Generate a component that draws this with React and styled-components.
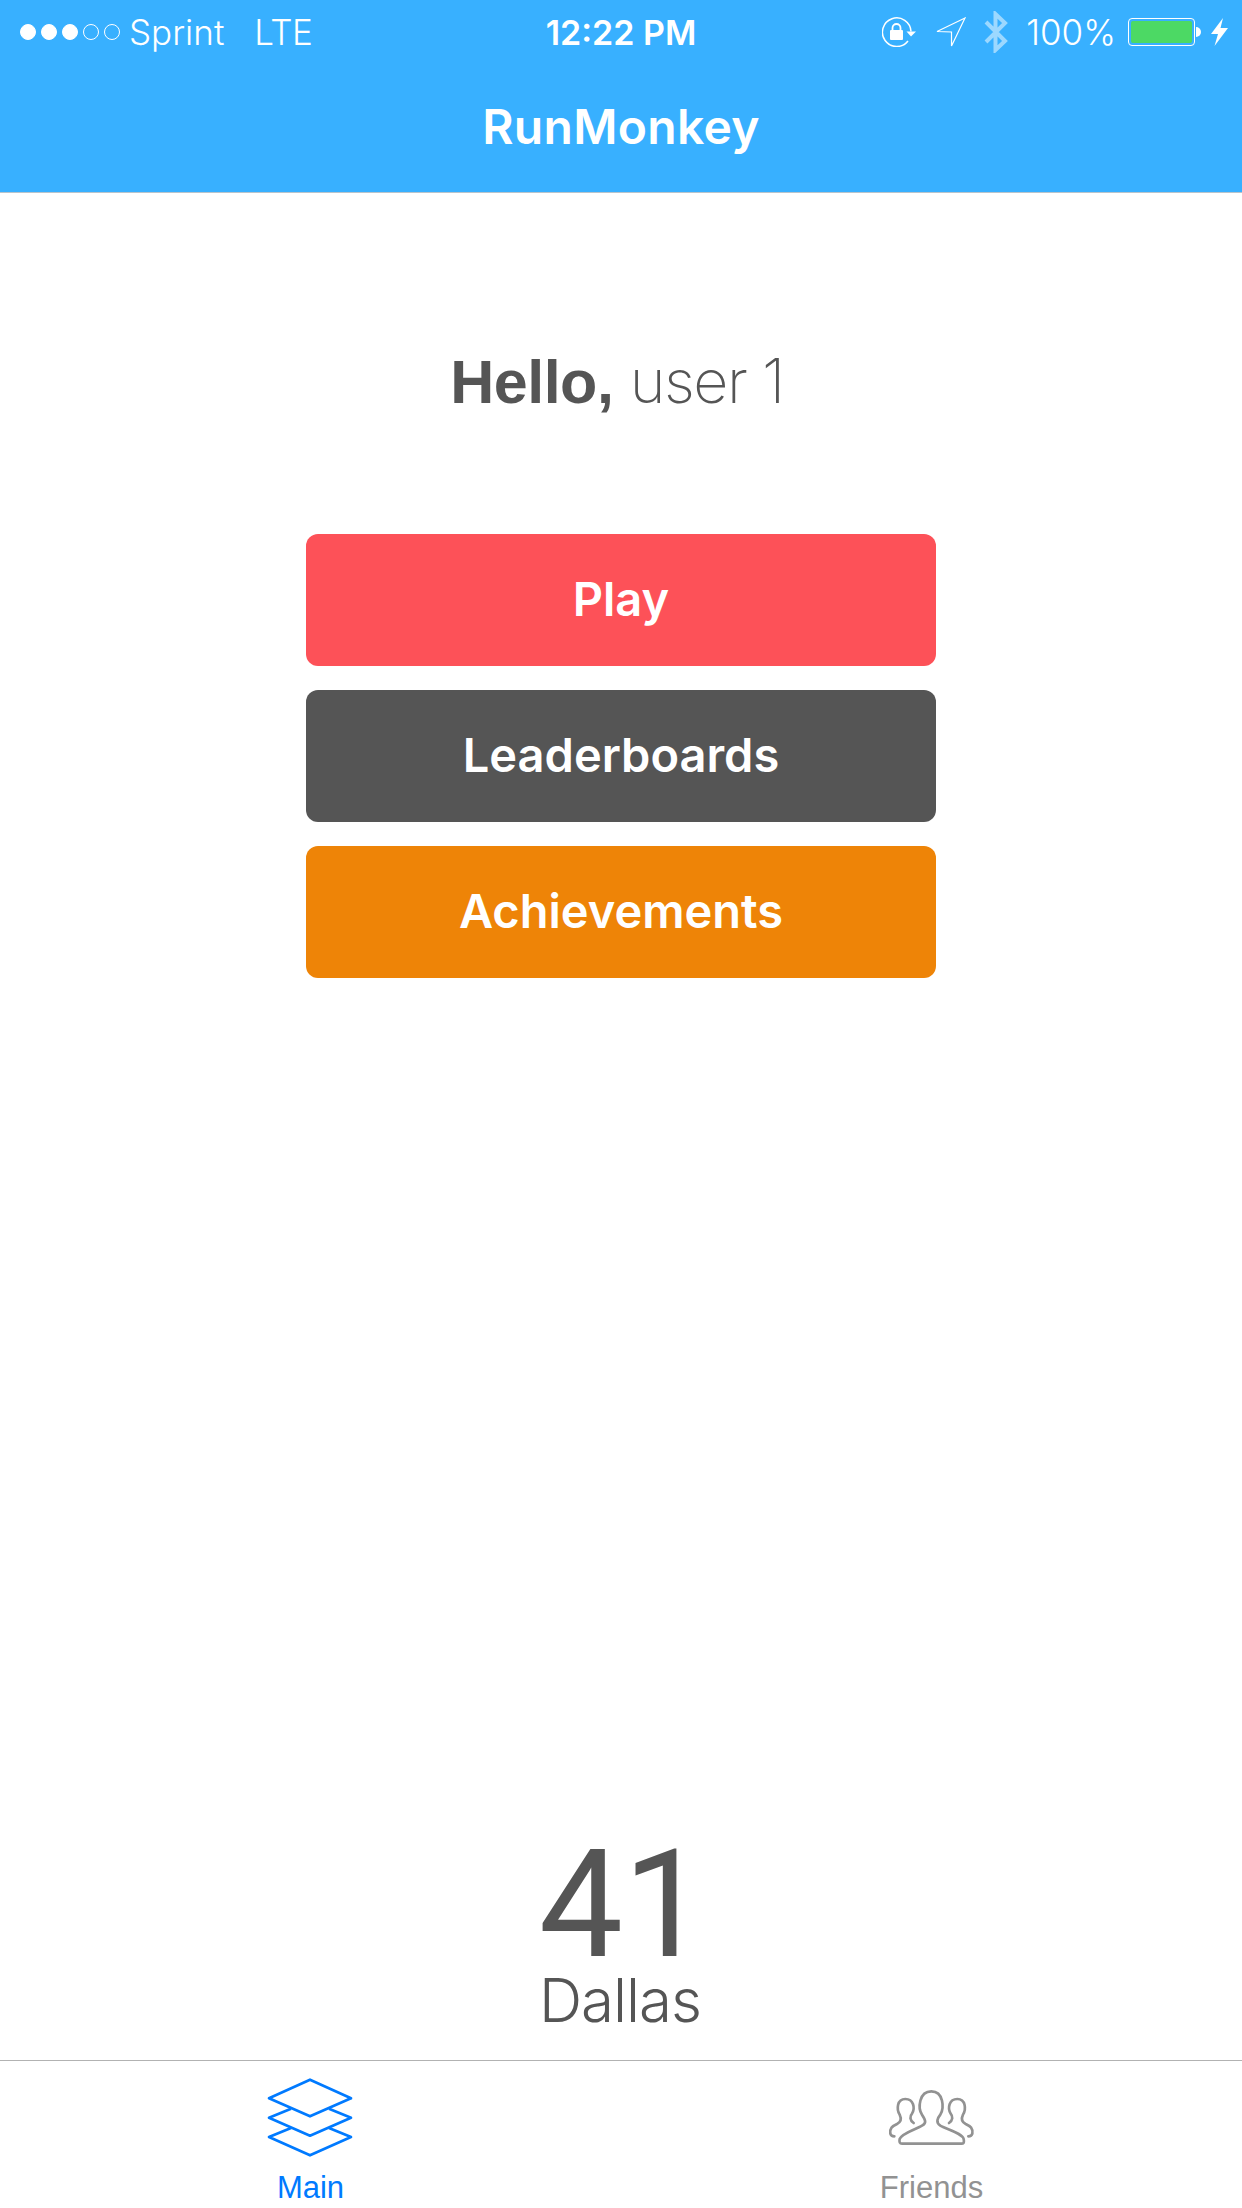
import React from 'react';
import styled, { createGlobalStyle } from 'styled-components';

const GlobalStyle = createGlobalStyle`
  html, body {
    margin: 0;
    padding: 0;
    background: #fff;
  }
`;

const Page = styled.div`
  width: 1242px;
  height: 2208px;
  display: flex;
  flex-direction: column;
  overflow: hidden;
  background: #fff;
  font-family: 'Liberation Sans', Arial, sans-serif;
  color: #555;
`;

const Header = styled.header`
  height: 193px;
  flex: none;
  box-sizing: border-box;
  background: #38b0ff;
  border-bottom: 1px solid #b8c4cc;
  color: #fff;
`;

const StatusBar = styled.div`
  height: 64px;
  display: grid;
  grid-template-columns: 1fr auto 1fr;
  align-items: center;
  padding: 0 14px 0 20px;
  font-family: Inter, sans-serif;
  font-weight: 300;
  font-size: 35px;
`;

const StatusLeft = styled.div`
  display: flex;
  align-items: center;
`;

const Signal = styled.div`
  display: flex;
  gap: 5px;
  margin-right: 9px;
`;

const Dot = styled.span`
  width: 16px;
  height: 16px;
  box-sizing: border-box;
  border-radius: 50%;
  border: 1.5px solid #fff;
  background: ${(p) => (p.$on ? '#fff' : 'transparent')};
`;

const Network = styled.span`
  margin-left: 30px;
  letter-spacing: -0.5px;
`;

const Clock = styled.div`
  font-weight: 600;
  font-size: 34px;
  margin-right: 6px;
`;

const StatusRight = styled.div`
  display: flex;
  align-items: center;
  justify-content: flex-end;
`;

const Percent = styled.span`
  margin: 0 12px 0 18px;
`;

const Battery = styled.div`
  width: 67px;
  height: 28px;
  box-sizing: border-box;
  padding: 2px;
  border: 1px solid #fff;
  border-radius: 4px;
  position: relative;
  &::after {
    content: '';
    position: absolute;
    right: -7px;
    top: 8px;
    width: 5px;
    height: 10px;
    background: #fff;
    border-radius: 0 5px 5px 0;
  }
`;

const BatteryFill = styled.div`
  height: 100%;
  background: #4cd964;
  border-radius: 2px;
`;

const Title = styled.h1`
  margin: 0;
  height: 128px;
  display: flex;
  align-items: center;
  justify-content: center;
  font-family: Inter, sans-serif;
  font-size: 48px;
  font-weight: 600;
  letter-spacing: 0.3px;
  padding-bottom: 4px;
  box-sizing: border-box;
`;

const Main = styled.main`
  flex: 1;
  display: flex;
  flex-direction: column;
  align-items: center;
`;

const Greeting = styled.p`
  margin: 152px 0 0;
  height: 189px;
  padding-right: 8px;
  font-size: 61px;
  line-height: 72px;
  letter-spacing: -0.5px;
  b {
    font-weight: 700;
  }
  span {
    font-family: Inter, sans-serif;
    font-weight: 200;
    letter-spacing: -1.5px;
  }
`;

const Buttons = styled.div`
  width: 630px;
  display: flex;
  flex-direction: column;
  gap: 24px;
`;

const ActionButton = styled.button`
  height: 132px;
  border: 0;
  border-radius: 12px;
  padding: 0 0 4px;
  background: ${(p) => p.$color};
  color: #fff;
  font-family: Inter, sans-serif;
  font-size: 47px;
  font-weight: 600;
`;

const Stat = styled.div`
  margin-top: auto;
  padding-bottom: 25px;
  display: flex;
  flex-direction: column;
  align-items: center;
`;

const StatValue = styled.div`
  font-family: Roboto, sans-serif;
  font-size: 150px;
  line-height: 120px;
  margin-left: 4px;
`;

const StatLabel = styled.div`
  font-family: Inter, sans-serif;
  font-weight: 300;
  font-size: 60px;
  line-height: 70px;
  letter-spacing: -1px;
  margin-right: 2px;
`;

const TabBar = styled.nav`
  height: 148px;
  flex: none;
  display: grid;
  grid-template-columns: 1fr 1fr;
  border-top: 1px solid #b2b2b2;
  box-sizing: border-box;
  overflow: hidden;
`;

const Tab = styled.div`
  display: flex;
  flex-direction: column;
  align-items: center;
  color: ${(p) => (p.$active ? '#007aff' : '#929292')};
`;

const TabIcon = styled.div`
  height: 96px;
  display: flex;
  align-items: center;
  justify-content: center;
  padding-top: 18px;
  box-sizing: border-box;
  margin-bottom: 14px;
`;

const TabLabel = styled.div`
  font-size: 31px;
  line-height: 34px;
`;

const RotationLock = () => (
  <svg width="36" height="30" viewBox="0 0 36 30" style={{ marginRight: 18 }}>
    <path d="M26 24A14.300 14.300 0 1 1 29 14.500" fill="none" stroke="#fff" strokeWidth="1.500" />
    <path d="M24.500 14.500H34L29 19.500Z" fill="#fff" />
    <rect x="8" y="13" width="13" height="10" rx="1" fill="#fff" />
    <path d="M10.500 13.500V11a4 4 0 0 1 8 0v2.500" fill="none" stroke="#fff" strokeWidth="1.800" />
  </svg>
);

const LocationArrow = () => (
  <svg width="30" height="30" viewBox="0 0 30 30" style={{ marginRight: 18 }}>
    <path d="M29 1L1 14.500L15.500 15L15.500 29Z" fill="none" stroke="#fff" strokeWidth="1.200" />
  </svg>
);

const Bluetooth = () => (
  <svg width="24" height="42" viewBox="0 0 24 42">
    <path d="M2 11L21 30L11.500 39V3L21 12L2 31" fill="none" stroke="#fff" strokeOpacity="0.5" strokeWidth="4" />
  </svg>
);

const Bolt = () => (
  <svg width="17" height="28" viewBox="0 0 17 28" style={{ marginLeft: 16 }}>
    <path d="M12 0L0 16H7L3.500 28L17 10H9.500Z" fill="#fff" />
  </svg>
);

const StackIcon = () => (
  <svg width="86" height="80" viewBox="141 115 258 240" fill="none" stroke="#007aff" strokeWidth="8" strokeLinejoin="round" style={{ marginLeft: -1 }}>
    <path d="M270 120L393 176L270 230L147 176Z" />
    <path d="M213 207L147 234L270 288L393 234L327 207" />
    <path d="M213 265L147 292L270 347L393 292L327 265" />
  </svg>
);

const FriendsIcon = () => (
  <svg width="90" height="60" viewBox="170 145 270 180" fill="none" stroke="#929292" strokeWidth="8" strokeLinecap="round">
    <path d="M215 312H395Q403 312 400 298C395 280 350 270 330 258C315 248 322 235 330 225C342 205 340 155 303 155C266 155 262 205 275 225C285 240 290 250 275 258C255 270 215 280 208 298Q205 312 215 312Z" />
    <path d="M250 250C238 242 238 230 245 222C255 205 250 178 225 178C200 178 198 208 208 225C215 240 210 248 200 253C185 260 178 265 180 282Q182 290 192 290" />
    <path d="M356 250C368 242 368 230 361 222C351 205 356 178 381 178C406 178 408 208 398 225C391 240 396 248 406 253C421 260 428 265 426 282Q424 290 414 290" />
  </svg>
);

const actions = [
  { label: 'Play', color: '#fd5158' },
  { label: 'Leaderboards', color: '#555555' },
  { label: 'Achievements', color: '#ee8407' },
];

function App() {
  return (
    <Page>
      <GlobalStyle />
      <Header>
        <StatusBar>
          <StatusLeft>
            <Signal>
              {[true, true, true, false, false].map((on, index) => (
                <Dot key={index} $on={on} />
              ))}
            </Signal>
            Sprint
            <Network>LTE</Network>
          </StatusLeft>
          <Clock>12:22 PM</Clock>
          <StatusRight>
            <RotationLock />
            <LocationArrow />
            <Bluetooth />
            <Percent>100%</Percent>
            <Battery>
              <BatteryFill />
            </Battery>
            <Bolt />
          </StatusRight>
        </StatusBar>
        <Title>RunMonkey</Title>
      </Header>
      <Main>
        <Greeting>
          <b>Hello,</b> <span>user 1</span>
        </Greeting>
        <Buttons>
          {actions.map((element) => (
            <ActionButton key={element.label} $color={element.color}>
              {element.label}
            </ActionButton>
          ))}
        </Buttons>
        <Stat>
          <StatValue>41</StatValue>
          <StatLabel>Dallas</StatLabel>
        </Stat>
      </Main>
      <TabBar>
        <Tab $active>
          <TabIcon>
            <StackIcon />
          </TabIcon>
          <TabLabel>Main</TabLabel>
        </Tab>
        <Tab>
          <TabIcon>
            <FriendsIcon />
          </TabIcon>
          <TabLabel>Friends</TabLabel>
        </Tab>
      </TabBar>
    </Page>
  );
}

export default App;
